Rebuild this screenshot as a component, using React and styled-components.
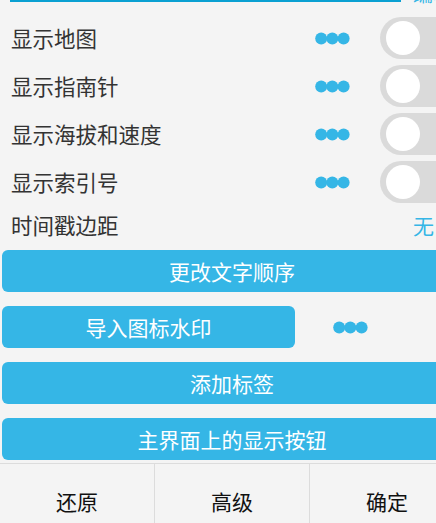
import React from "react";
import styled, { createGlobalStyle } from "styled-components";

const Global = createGlobalStyle`
  html, body { margin: 0; padding: 0; background: #f4f4f4; overflow: hidden; }
  body { font-family: "Noto Sans CJK SC", "Noto Sans", sans-serif; }
`;

const Dialog = styled.div`
  width: 464px;
  height: 538px;
  display: flex;
  flex-direction: column;
  background: #f4f4f4;
  overflow: hidden;
`;

const Scroll = styled.div`
  flex: 1;
  display: flex;
  flex-direction: column;
  padding: 0 2px;
  overflow: hidden;
`;

const TopRow = styled.div`
  display: flex;
  align-items: flex-end;
  margin-top: -38px;
  height: 40px;
  padding-left: 8px;
  gap: 12px;
`;

const Input = styled.div`
  width: 391px;
  height: 40px;
  box-sizing: border-box;
  border: 2px solid #0aa0d2;
  background: #fff;
`;

const EditLink = styled.span`
  font-size: 20px;
  line-height: 20px;
  color: #35b6e6;
  margin-bottom: -2px;
`;

const Row = styled.div`
  display: flex;
  align-items: center;
  height: ${(p) => p.$h || 48}px;
  padding-left: 9px;
  margin-top: ${(p) => p.$mt || 0}px;
`;

const Label = styled.span`
  font-size: 21.5px;
  color: #333;
  flex: 1;
  line-height: 1;
`;

const Value = styled.span`
  font-size: 21px;
  color: #35b6e6;
  line-height: 1;
  width: 49px;
`;

const DotsWrap = styled.div`
  width: 65px;
  display: flex;
  align-items: center;
`;

const Toggle = styled.div`
  width: 82px;
  height: 42px;
  border-radius: 21px;
  background: #dadada;
  display: flex;
  align-items: center;
  padding-left: 6px;
  box-sizing: border-box;
`;

const Knob = styled.div`
  width: 34px;
  height: 34px;
  border-radius: 50%;
  background: #fff;
`;

const Button = styled.button`
  width: ${(p) => p.$w || "100%"};
  height: 42px;
  border: none;
  border-radius: 6px;
  background: #35b6e6;
  color: #fff;
  font-family: "Noto Sans CJK SC", "Noto Sans", sans-serif;
  font-size: 21px;
  padding: 0;
  margin-top: ${(p) => p.$mt || 0}px;
  flex-shrink: 0;
`;

const ButtonRow = styled.div`
  display: flex;
  align-items: center;
  margin-top: ${(p) => p.$mt || 0}px;
`;

const ButtonDots = styled.div`
  margin-left: 38px;
  display: flex;
  align-items: center;
`;

const BottomBar = styled.div`
  display: grid;
  grid-template-columns: 154px 155px 155px;
  height: 74px;
  border-top: 1px solid #dcdcdc;
  flex-shrink: 0;
  margin-top: 3px;
`;

const BarButton = styled.div`
  display: flex;
  align-items: center;
  justify-content: center;
  font-size: 21px;
  color: #111;
  border-left: ${(p) => (p.$first ? "none" : "1px solid #dcdcdc")};
`;

const Dots = () => (
  <svg width="35" height="13" viewBox="0 0 35 13">
    <circle cx="6.2" cy="6.5" r="6" fill="#35b6e6" />
    <circle cx="17.3" cy="6.5" r="6" fill="#35b6e6" />
    <circle cx="28.6" cy="6.5" r="6" fill="#35b6e6" />
  </svg>
);

const switches = ["显示地图", "显示指南针", "显示海拔和速度", "显示索引号"];

export default function App() {
  return (
    <>
      <Global />
      <Dialog>
        <Scroll>
          <TopRow>
            <Input />
            <EditLink>编辑</EditLink>
          </TopRow>
          {switches.map((s, i) => (
            <Row key={s} $mt={i === 0 ? 12 : 0}>
              <Label>{s}</Label>
              <DotsWrap>
                <Dots />
              </DotsWrap>
              <Toggle>
                <Knob />
              </Toggle>
            </Row>
          ))}
          <Row $h={38}>
            <Label>时间戳边距</Label>
            <Value>无</Value>
          </Row>
          <Button $mt={6}>更改文字顺序</Button>
          <ButtonRow $mt={14}>
            <Button $w="293px">导入图标水印</Button>
            <ButtonDots>
              <Dots />
            </ButtonDots>
          </ButtonRow>
          <Button $mt={14}>添加标签</Button>
          <Button $mt={14}>主界面上的显示按钮</Button>
        </Scroll>
        <BottomBar>
          <BarButton $first>还原</BarButton>
          <BarButton>高级</BarButton>
          <BarButton>确定</BarButton>
        </BottomBar>
      </Dialog>
    </>
  );
}
